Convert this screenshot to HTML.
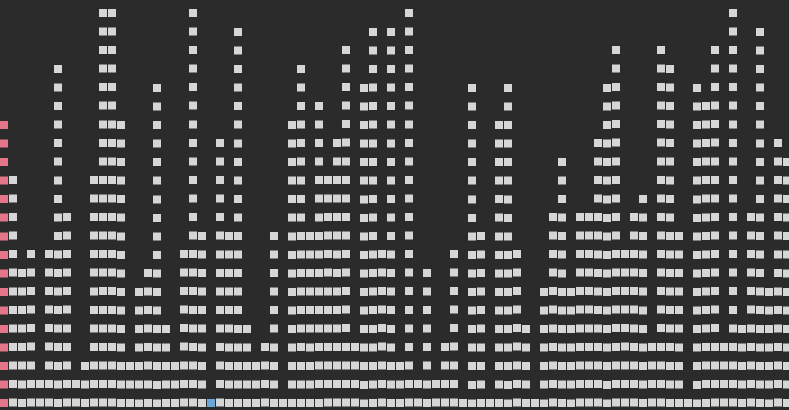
<!DOCTYPE html>
<html><head><meta charset="utf-8"><style>
html,body{margin:0;padding:0;background:#2b2b2b;width:789px;height:410px;overflow:hidden}
#g{position:absolute;left:0;top:0;width:789px;height:410px}
#g i{position:absolute;width:8px;top:calc(9.3px + 18.55px * (22 - var(--h)));height:calc(18.55px * (var(--h) - 1) + 8px);background:repeating-linear-gradient(to bottom,#d6d6d6 0,#d6d6d6 8px,transparent 8px,transparent 18.55px)}
#g i.p{background:repeating-linear-gradient(to bottom,#e5768a 0,#e5768a 8px,transparent 8px,transparent 18.55px)}
#g i.b{background:#6ba6d6}
</style></head><body>
<div id="g">
<i class="p" style="--h:16;left:0px"></i>
<i style="--h:13;left:9px"></i>
<i style="--h:8;left:18px"></i>
<i style="--h:9;left:27px"></i>
<i style="--h:2;left:36px"></i>
<i style="--h:9;left:45px"></i>
<i style="--h:19;left:54px"></i>
<i style="--h:11;left:63px"></i>
<i style="--h:2;left:72px"></i>
<i style="--h:3;left:81px"></i>
<i style="--h:13;left:90px"></i>
<i style="--h:22;left:99px"></i>
<i style="--h:22;left:108px"></i>
<i style="--h:16;left:117px"></i>
<i style="--h:3;left:126px"></i>
<i style="--h:7;left:135px"></i>
<i style="--h:8;left:144px"></i>
<i style="--h:18;left:153px"></i>
<i style="--h:5;left:162px"></i>
<i style="--h:3;left:171px"></i>
<i style="--h:9;left:180px"></i>
<i style="--h:22;left:189px"></i>
<i style="--h:10;left:198px"></i>
<i class="b" style="--h:1;left:207px"></i>
<i style="--h:15;left:216px"></i>
<i style="--h:10;left:225px"></i>
<i style="--h:21;left:234px"></i>
<i style="--h:5;left:243px"></i>
<i style="--h:3;left:252px"></i>
<i style="--h:4;left:261px"></i>
<i style="--h:10;left:270px"></i>
<i style="--h:1;left:279px"></i>
<i style="--h:16;left:288px"></i>
<i style="--h:19;left:297px"></i>
<i style="--h:10;left:306px"></i>
<i style="--h:17;left:315px"></i>
<i style="--h:13;left:324px"></i>
<i style="--h:15;left:333px"></i>
<i style="--h:20;left:342px"></i>
<i style="--h:4;left:351px"></i>
<i style="--h:18;left:360px"></i>
<i style="--h:21;left:369px"></i>
<i style="--h:9;left:378px"></i>
<i style="--h:21;left:387px"></i>
<i style="--h:3;left:396px"></i>
<i style="--h:22;left:405px"></i>
<i style="--h:2;left:414px"></i>
<i style="--h:8;left:423px"></i>
<i style="--h:2;left:432px"></i>
<i style="--h:4;left:441px"></i>
<i style="--h:9;left:450px"></i>
<i style="--h:1;left:459px"></i>
<i style="--h:18;left:468px"></i>
<i style="--h:10;left:477px"></i>
<i style="--h:1;left:486px"></i>
<i style="--h:16;left:495px"></i>
<i style="--h:18;left:504px"></i>
<i style="--h:9;left:513px"></i>
<i style="--h:5;left:522px"></i>
<i style="--h:1;left:531px"></i>
<i style="--h:7;left:540px"></i>
<i style="--h:11;left:549px"></i>
<i style="--h:14;left:558px"></i>
<i style="--h:7;left:567px"></i>
<i style="--h:11;left:576px"></i>
<i style="--h:11;left:585px"></i>
<i style="--h:15;left:594px"></i>
<i style="--h:18;left:603px"></i>
<i style="--h:20;left:612px"></i>
<i style="--h:9;left:621px"></i>
<i style="--h:11;left:630px"></i>
<i style="--h:12;left:639px"></i>
<i style="--h:4;left:648px"></i>
<i style="--h:20;left:657px"></i>
<i style="--h:19;left:666px"></i>
<i style="--h:10;left:675px"></i>
<i style="--h:1;left:684px"></i>
<i style="--h:18;left:693px"></i>
<i style="--h:17;left:702px"></i>
<i style="--h:20;left:711px"></i>
<i style="--h:4;left:720px"></i>
<i style="--h:22;left:729px"></i>
<i style="--h:5;left:738px"></i>
<i style="--h:11;left:747px"></i>
<i style="--h:21;left:756px"></i>
<i style="--h:7;left:765px"></i>
<i style="--h:15;left:774px"></i>
<i style="--h:14;left:783px"></i>
</div>
</body></html>
